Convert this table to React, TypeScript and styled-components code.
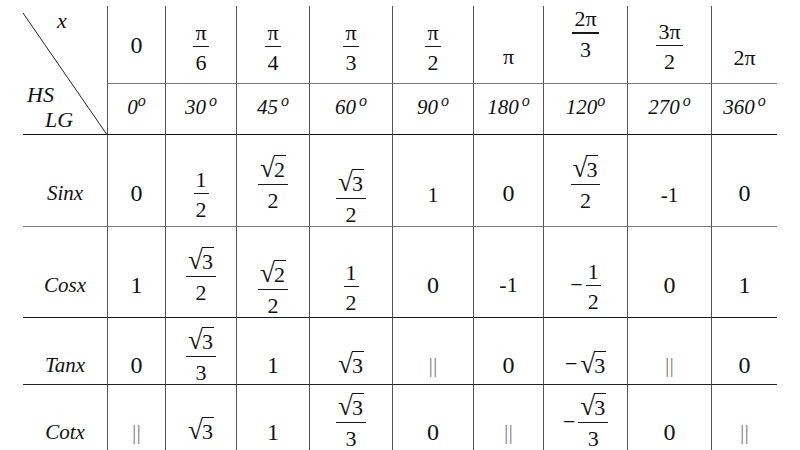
import React from 'react';
import styled, { createGlobalStyle } from 'styled-components';

const SERIF = `"Liberation Serif", "Times New Roman", serif`;

const Global = createGlobalStyle`
  html, body { margin: 0; padding: 0; background: #fff; overflow: hidden; }
  body { font-family: ${SERIF}; color: #111; }
`;

const Page = styled.div`
  width: 800px;
  height: 450px;
  overflow: hidden;
  box-sizing: border-box;
  padding: 6px 0 0 23px;
  font-family: ${SERIF};
`;

const Table = styled.div`
  display: grid;
  grid-template-columns: 84px 58px 71px 73px 83px 81px 70px 84px 84px 66px;
  grid-template-rows: 78px 51px 92px 91px 67px 70px;
`;

const Cell = styled.div<{ $first?: boolean; $line?: string; $dy?: number }>`
  display: flex;
  align-items: center;
  justify-content: center;
  box-sizing: border-box;
  min-width: 0;
  border-left: ${(p) => (p.$first ? 'none' : '1px solid #555')};
  border-bottom: ${(p) => (p.$line ? `1px solid ${p.$line}` : 'none')};
  padding-top: ${(p) => Math.max(0, (p.$dy ?? 0) * 2)}px;
  padding-bottom: ${(p) => Math.max(0, -(p.$dy ?? 0) * 2)}px;
`;

const CornerCell = styled.div`
  position: relative;
  grid-row: span 2;
  display: flex;
  flex-direction: column;
  align-items: flex-start;
  box-sizing: border-box;
  border-bottom: 1px solid #111;
  padding-top: 4px;
  font-style: italic;
  font-size: 22px;
  line-height: 1;
`;

const CornerLabel = styled.span<{ $left: number; $top: number }>`
  display: block;
  margin-left: ${(p) => p.$left}px;
  margin-top: ${(p) => p.$top}px;
`;

const Diagonal = styled.svg`
  position: absolute;
  left: 0;
  top: 0;
  width: 84px;
  height: 129px;
  pointer-events: none;
`;

const Num = styled.span<{ $size?: number; $muted?: boolean }>`
  font-size: ${(p) => p.$size ?? 24}px;
  line-height: 1;
  color: ${(p) => (p.$muted ? '#808080' : '#111')};
`;

const Label = styled.span`
  font-style: italic;
  font-size: 21px;
  line-height: 1;
`;

const Deg = styled.span`
  font-style: italic;
  font-size: 21px;
  line-height: 1;
`;

const DegMark = styled.sup<{ $gap?: boolean }>`
  font-size: 16px;
  line-height: 0;
  vertical-align: 8px;
  margin-left: ${(p) => (p.$gap ? 3 : 0)}px;
`;

const Frac = styled.span`
  display: inline-grid;
  grid-template-rows: 1fr auto 1fr;
  justify-items: center;
  font-size: 22px;
  line-height: 1;
`;

const FracNum = styled.span`
  display: flex;
  align-self: end;
  padding: 0 2px 2px;
`;

const FracBar = styled.span<{ $thick?: boolean }>`
  justify-self: stretch;
  height: ${(p) => (p.$thick ? 2 : 1)}px;
  background: #1a1a1a;
`;

const FracDen = styled.span`
  display: flex;
  align-self: start;
  padding: 5px 2px 0;
`;

const SqrtWrap = styled.span`
  display: inline-flex;
  align-items: flex-start;
  font-size: 22px;
  line-height: 1;
`;

const Radical = styled.span`
  font-size: 27px;
  line-height: 1;
  margin-right: -1px;
`;

const Radicand = styled.span`
  display: block;
  border-top: 1px solid #111;
  padding: 3px 1px 0 0;
  line-height: 1;
`;

const Signed = styled.span`
  display: inline-flex;
  align-items: center;
  gap: 3px;
  font-size: 22px;
  line-height: 1;
`;

const Sqrt = ({ children }: { children: React.ReactNode }) => (
  <SqrtWrap>
    <Radical>√</Radical>
    <Radicand>{children}</Radicand>
  </SqrtWrap>
);

const F = ({ n, d, thick }: { n: React.ReactNode; d: React.ReactNode; thick?: boolean }) => (
  <Frac>
    <FracNum>{n}</FracNum>
    <FracBar $thick={thick} />
    <FracDen>{d}</FracDen>
  </Frac>
);

const Neg = ({ children }: { children: React.ReactNode }) => (
  <Signed>
    <span>−</span>
    {children}
  </Signed>
);

const D = ({ v, gap }: { v: string; gap?: boolean }) => (
  <Deg>
    {v}
    <DegMark $gap={gap}>o</DegMark>
  </Deg>
);

type C = { c: React.ReactNode; dy: number };

const undef = <Num $size={22} $muted>||</Num>;

const rows: { line?: string; cells: C[] }[] = [
  {
    line: '#777',
    cells: [
      { c: <Num>0</Num>, dy: 0 },
      { c: <F n="π" d="6" />, dy: 1.5 },
      { c: <F n="π" d="4" />, dy: 1.5 },
      { c: <F n="π" d="3" />, dy: 1.5 },
      { c: <F n="π" d="2" />, dy: 1.5 },
      { c: <Num $size={22}>π</Num>, dy: 12 },
      { c: <F n="2π" d="3" thick />, dy: -11.5 },
      { c: <F n="3π" d="2" />, dy: 0.5 },
      { c: <Num $size={22}>2π</Num>, dy: 13.5 },
    ],
  },
  {
    line: '#111',
    cells: [
      { c: <D v="0" />, dy: -2 },
      { c: <D v="30" gap />, dy: -2 },
      { c: <D v="45" gap />, dy: -2 },
      { c: <D v="60" gap />, dy: -2 },
      { c: <D v="90" gap />, dy: -2 },
      { c: <D v="180" gap />, dy: -2 },
      { c: <D v="120" />, dy: -2 },
      { c: <D v="270" gap />, dy: -2 },
      { c: <D v="360" gap />, dy: -2 },
    ],
  },
  {
    line: '#777',
    cells: [
      { c: <Label>Sinx</Label>, dy: 12.5 },
      { c: <Num>0</Num>, dy: 12.5 },
      { c: <F n="1" d="2" />, dy: 12.5 },
      { c: <F n={<Sqrt>2</Sqrt>} d="2" />, dy: 3.5 },
      { c: <F n={<Sqrt>3</Sqrt>} d="2" />, dy: 17.5 },
      { c: <Num $size={21}>1</Num>, dy: 14.5 },
      { c: <Num>0</Num>, dy: 12.5 },
      { c: <F n={<Sqrt>3</Sqrt>} d="2" />, dy: 3.5 },
      { c: <Num $size={21}>-1</Num>, dy: 14.5 },
      { c: <Num>0</Num>, dy: 12.5 },
    ],
  },
  {
    line: '#1a1a1a',
    cells: [
      { c: <Label>Cosx</Label>, dy: 13 },
      { c: <Num>1</Num>, dy: 13 },
      { c: <F n={<Sqrt>3</Sqrt>} d="2" />, dy: 4 },
      { c: <F n={<Sqrt>2</Sqrt>} d="2" />, dy: 17 },
      { c: <F n="1" d="2" />, dy: 14 },
      { c: <Num>0</Num>, dy: 13 },
      { c: <Num $size={22}>-1</Num>, dy: 13 },
      { c: <Neg><F n="1" d="2" /></Neg>, dy: 13 },
      { c: <Num>0</Num>, dy: 13 },
      { c: <Num>1</Num>, dy: 13 },
    ],
  },
  {
    line: '#222',
    cells: [
      { c: <Label>Tanx</Label>, dy: 14 },
      { c: <Num>0</Num>, dy: 14 },
      { c: <F n={<Sqrt>3</Sqrt>} d="3" />, dy: 5 },
      { c: <Num $size={23}>1</Num>, dy: 14 },
      { c: <Sqrt>3</Sqrt>, dy: 13 },
      { c: undef, dy: 14 },
      { c: <Num>0</Num>, dy: 14 },
      { c: <Neg><Sqrt>3</Sqrt></Neg>, dy: 13 },
      { c: undef, dy: 14 },
      { c: <Num>0</Num>, dy: 14 },
    ],
  },
  {
    cells: [
      { c: <Label>Cotx</Label>, dy: 12 },
      { c: undef, dy: 12 },
      { c: <Sqrt>3</Sqrt>, dy: 10 },
      { c: <Num $size={23}>1</Num>, dy: 12 },
      { c: <F n={<Sqrt>3</Sqrt>} d="3" />, dy: 2 },
      { c: <Num>0</Num>, dy: 12 },
      { c: undef, dy: 12 },
      { c: <Neg><F n={<Sqrt>3</Sqrt>} d="3" /></Neg>, dy: 2 },
      { c: <Num>0</Num>, dy: 12 },
      { c: undef, dy: 12 },
    ],
  },
];

export default function App() {
  return (
    <>
      <Global />
      <Page>
        <Table>
          <CornerCell>
            <Diagonal viewBox="0 0 84 129">
              <line x1="0" y1="7" x2="83.5" y2="128" stroke="#222" strokeWidth="1" />
            </Diagonal>
            <CornerLabel $left={34} $top={0}>x</CornerLabel>
            <CornerLabel $left={4} $top={52}>HS</CornerLabel>
            <CornerLabel $left={22} $top={3}>LG</CornerLabel>
          </CornerCell>
          {rows.map((r, ri) =>
            r.cells.map((cell, ci) => {
              const isLabel = ri >= 2 && ci === 0;
              return (
                <Cell key={`${ri}-${ci}`} $first={isLabel} $line={r.line} $dy={cell.dy}>
                  {cell.c}
                </Cell>
              );
            })
          )}
        </Table>
      </Page>
    </>
  );
}
